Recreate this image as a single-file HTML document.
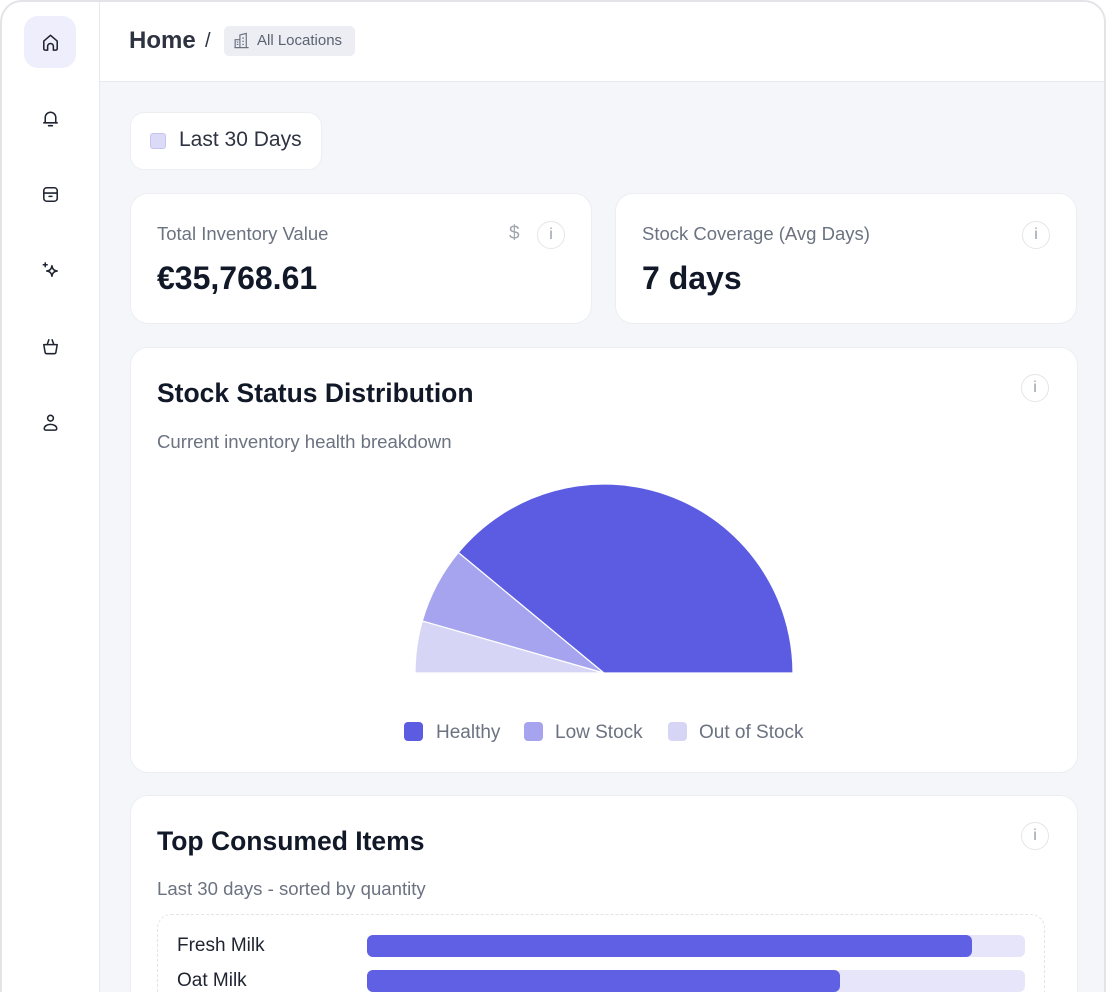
<!DOCTYPE html>
<html><head><meta charset="utf-8"><style>
*{box-sizing:border-box;margin:0;padding:0}
html,body{width:1106px;height:992px;overflow:hidden;background:#fff;font-family:"Liberation Sans",Roboto,sans-serif;}
.frame{position:absolute;left:0;top:0;width:1106px;height:992px;border:2px solid #e3e4e8;border-bottom:none;border-radius:22px 22px 0 0;overflow:hidden;background:#f5f6fa}
.side{position:absolute;left:0;top:0;width:98px;height:100%;background:#fff;border-right:1px solid #e8e9ee}
.ic{position:absolute;left:22px;width:52px;height:52px;display:flex;align-items:center;justify-content:center;border-radius:14px}
.ic svg{width:23px;height:23px;fill:none;stroke:#1f2430;stroke-width:1.6;stroke-linecap:round;stroke-linejoin:round}
.head{position:absolute;left:98px;top:0;right:0;height:80px;background:#fff;border-bottom:1px solid #e8e9ee}
.card{position:absolute;background:#fff;border:1px solid #eceef2;border-radius:18px}
.info{position:absolute;width:28px;height:28px;border:1.5px solid #e5e6ea;border-radius:50%;color:#9aa0aa;font-size:16px;text-align:center;line-height:25px}
.lbl{font-size:18.5px;color:#6b7280}
.big{font-size:32px;font-weight:700;color:#111827}
.ttl{font-size:26.5px;font-weight:700;color:#111827}
.sub{font-size:18.6px;color:#6b7280}
</style></head><body>
<div class="frame">
<div class="side">
<div class="ic" style="top:14px;background:#eeeefc"><svg viewBox="0 0 24 24"><path d="M5 10.5L12 4.5l7 6V18.5a1.5 1.5 0 0 1-1.5 1.5H15v-4a3 3 0 0 0-6 0v4H6.5A1.5 1.5 0 0 1 5 18.5z"/></svg></div>
<div class="ic" style="top:90px"><svg viewBox="0 0 24 24"><path d="M6.5 16.5V11a5.5 5.5 0 0 1 11 0v5.5M5 16.5h14M10 19.5h4"/></svg></div>
<div class="ic" style="top:166px"><svg viewBox="0 0 24 24"><rect x="5" y="5" width="14" height="14" rx="3"/><path d="M5 10.5h14M10.5 14h3"/></svg></div>
<div class="ic" style="top:242px"><svg viewBox="0 0 24 24"><path d="M13.5 7c.6 3.6 1.9 4.9 5.5 5.5-3.6.6-4.9 1.900-5.5 5.5-.6-3.6-1.9-4.9-5.5-5.5 3.6-.6 4.9-1.9 5.5-5.5zM6.5 4v4M4.5 6h4"/></svg></div>
<div class="ic" style="top:318px"><svg viewBox="0 0 24 24"><path d="M5 10h14l-1.4 8.2a1.5 1.5 0 0 1-1.5 1.3H7.9a1.5 1.5 0 0 1-1.5-1.3zM8.5 10l1.8-5M15.5 10l-1.8-5"/></svg></div>
<div class="ic" style="top:394px"><svg viewBox="0 0 24 24"><circle cx="12" cy="7.5" r="3"/><path d="M5.5 18.5c0-2.8 2.9-4.5 6.5-4.5s6.5 1.7 6.5 4.5c0 .9-.8 1.5-1.800 1.5H7.3c-1 0-1.8-.6-1.8-1.5z"/></svg></div>
</div>
<div class="head">
<div style="position:absolute;left:29px;top:25px;font-size:24px;font-weight:700;color:#2d3340">Home</div>
<div style="position:absolute;left:105px;top:28px;font-size:20px;color:#2d3340">/</div>
<div style="position:absolute;left:124px;top:24px;width:131px;height:30px;background:#eceef4;border-radius:5px;font-size:15px;color:#5b6270;line-height:30px;padding-left:33px">All Locations
<svg style="position:absolute;left:8px;top:5px" width="19" height="19" viewBox="0 0 24 24" fill="none" stroke="#6b7280" stroke-width="1.5"><path d="M3 21h18M4 21V11h6v10M10 21V5l8-2v18M6 14h2M6 17h2M13 9h2M13 13h2M13 17h2"/></svg></div>
</div>
<div class="card" style="left:128px;top:110px;width:192px;height:58px;border-radius:14px">
<div style="position:absolute;left:19px;top:20px;width:16px;height:16px;background:#dcdbf7;border:1.5px solid #c6c4f0;border-radius:3px"></div>
<div style="position:absolute;left:48px;top:15px;font-size:21px;color:#2d3340">Last 30 Days</div></div>
<div class="card" style="left:128px;top:191px;width:462px;height:131px">
<div class="lbl" style="position:absolute;left:26px;top:29px">Total Inventory Value</div>
<div class="big" style="position:absolute;left:26px;top:66px">€35,768.61</div>
<div style="position:absolute;left:378px;top:29px;font-size:19px;color:#a0a5ae">$</div>
<div class="info" style="left:406px;top:27px">i</div></div>
<div class="card" style="left:613px;top:191px;width:462px;height:131px">
<div class="lbl" style="position:absolute;left:26px;top:29px">Stock Coverage (Avg Days)</div>
<div class="big" style="position:absolute;left:26px;top:66px">7 days</div>
<div class="info" style="left:406px;top:27px">i</div></div>
<div class="card" style="left:128px;top:345px;width:948px;height:426px">
<div class="ttl" style="position:absolute;left:26px;top:30px">Stock Status Distribution</div>
<div class="sub" style="position:absolute;left:26px;top:83px">Current inventory health breakdown</div>
<div class="info" style="left:890px;top:26px">i</div>
<svg style="position:absolute;left:0;top:0" width="948" height="426">
<g transform="translate(473,325)" stroke="#fff" stroke-width="1.2">
<path d="M0 0L-189 0A189 189 0 0 1 -181.7 -52.1Z" fill="#d6d5f5"/>
<path d="M0 0L-181.7 -52.1A189 189 0 0 1 -145.6 -120.5Z" fill="#a6a4ee"/>
<path d="M0 0L-145.6 -120.5A189 189 0 0 1 189 0Z" fill="#5b5ce2"/>
</g></svg>
<div style="position:absolute;left:273px;top:374px;width:19px;height:19px;background:#5b5ce2;border-radius:4px"></div>
<div class="sub" style="position:absolute;left:305px;top:374px;font-size:19px">Healthy</div>
<div style="position:absolute;left:393px;top:374px;width:19px;height:19px;background:#a6a4ee;border-radius:4px"></div>
<div class="sub" style="position:absolute;left:424px;top:374px;font-size:19px">Low Stock</div>
<div style="position:absolute;left:537px;top:374px;width:19px;height:19px;background:#d6d5f5;border-radius:4px"></div>
<div class="sub" style="position:absolute;left:568px;top:374px;font-size:19px">Out of Stock</div>
</div>
<div class="card" style="left:128px;top:793px;width:948px;height:199px;border-radius:18px 18px 0 0;border-bottom:none">
<div class="ttl" style="position:absolute;left:26px;top:30px">Top Consumed Items</div>
<div class="sub" style="position:absolute;left:26px;top:82px">Last 30 days - sorted by quantity</div>
<div class="info" style="left:890px;top:26px">i</div>
<div style="position:absolute;left:26px;top:118px;width:888px;height:120px;border:1.5px dashed #e3e4e8;border-bottom:none;border-radius:14px 14px 0 0">
<div style="position:absolute;left:19px;top:20px;font-size:19px;color:#1f2430">Fresh Milk</div>
<div style="position:absolute;left:209px;top:20px;width:658px;height:22px;background:#e6e5fa;border-radius:6px"><div style="width:605px;height:22px;background:#5f60e3;border-radius:6px"></div></div>
<div style="position:absolute;left:19px;top:55px;font-size:19px;color:#1f2430">Oat Milk</div>
<div style="position:absolute;left:209px;top:55px;width:658px;height:22px;background:#e6e5fa;border-radius:6px"><div style="width:473px;height:22px;background:#5f60e3;border-radius:6px"></div></div>
</div></div>
</div>
</body></html>
